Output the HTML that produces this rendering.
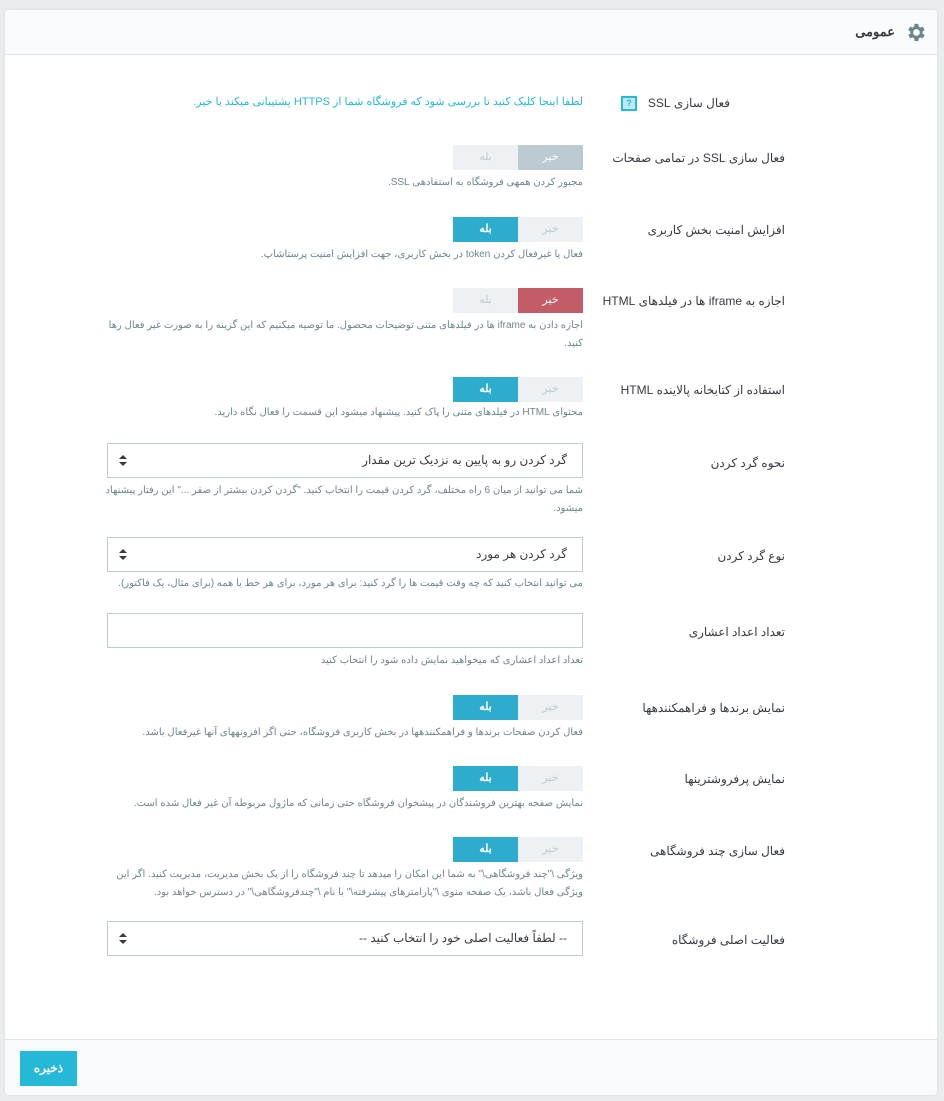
<!DOCTYPE html>
<html lang="fa" dir="rtl"><head><meta charset="utf-8">
<style>
*{box-sizing:border-box;margin:0;padding:0}
body{width:944px;height:1101px;background:#eaedee;font-family:"Liberation Sans","Noto Sans CJK SC",sans-serif;position:relative;overflow:hidden;color:#363a41}
.card{position:absolute;left:5px;top:10px;width:932px;height:1085px;background:#fff;border-radius:4px;box-shadow:0 0 3px rgba(0,0,0,.08)}
.hdr{position:absolute;left:0;top:0;width:932px;height:45px;background:#fafbfc;border-bottom:1px solid #dde3e6;border-radius:4px 4px 0 0}
.hdr span{position:absolute;right:42px;top:14px;font-size:13px;font-weight:bold;color:#363a41}
.hdr svg{position:absolute;right:10px;top:11px}
.ftr{position:absolute;left:0;top:1029px;width:932px;height:56px;background:#f8fafb;border-top:1px solid #dde3e6;border-radius:0 0 4px 4px}
.btn{position:absolute;left:15px;top:11px;width:57px;height:35px;background:#25b9d7;color:#fff;font-size:12px;text-align:center;line-height:35px;font-weight:bold}
.lbl{position:absolute;right:152px;font-size:12px;color:#363a41;white-space:nowrap}
.help{position:absolute;right:354px;width:480px;font-size:10px;color:#6c868e;line-height:18px;text-align:right}
.sw{position:absolute;left:448px;width:130px;height:25px;display:flex;flex-direction:row}
.sw div{width:65px;height:25px;font-size:11px;text-align:center;line-height:25px;background:#eef1f3;color:#bbcdd2}
.sel{position:absolute;left:102px;width:476px;height:35px;border:1px solid #bbcdd2;font-size:12px;line-height:33px;padding-right:15px;color:#363a41}
.sel i{position:absolute;left:11px;top:11px;width:8px;height:12px}
.sel i:before{content:"";position:absolute;left:0;top:0;border:4px solid transparent;border-bottom:4px solid #363a41;border-top:0}
.sel i:after{content:"";position:absolute;left:0;top:7px;border:4px solid transparent;border-top:4px solid #363a41;border-bottom:0}
</style></head><body>
<div class="card">
<div class="hdr"><svg width="23" height="23" viewBox="0 0 24 24"><path fill="#6c868e" d="M19.4 13a7.5 7.5 0 0 0 0-2l2.1-1.6-2-3.5-2.5 1a7 7 0 0 0-1.7-1L15 3h-4l-.4 2.9a7 7 0 0 0-1.7 1l-2.5-1-2 3.5L6.6 11a7.5 7.5 0 0 0 0 2l-2.1 1.6 2 3.5 2.5-1a7 7 0 0 0 1.7 1L11 21h4l.4-2.9a7 7 0 0 0 1.7-1l2.5 1 2-3.5zM13 15.5a3.5 3.5 0 1 1 0-7 3.5 3.5 0 0 1 0 7z"/></svg><span>عمومی</span></div>

<div class="lbl" style="top:86px;right:207px">فعال سازی SSL</div>
<div style="position:absolute;right:300px;top:86px;width:16px;height:15px;border:2px solid #25b9d7;background:#bde9f2;font-size:9px;line-height:11px;text-align:center;color:#25b9d7;font-weight:bold">?</div>
<div style="position:absolute;right:354px;top:85px;font-size:11px;color:#25b9d7;white-space:nowrap">لطفا اینجا کلیک کنید تا بررسی شود که فروشگاه شما از HTTPS پشتیبانی میکند یا خیر.</div>

<div class="lbl" style="top:141px">فعال سازی SSL در تمامی صفحات</div>
<div class="sw" style="top:135px"><div style="background:#bbcbd1;color:#fff">خیر</div><div>بله</div></div>
<div class="help" style="top:164px">مجبور کردن همهی فروشگاه به استفادهی SSL.</div>

<div class="lbl" style="top:213px">افزایش امنیت بخش کاربری</div>
<div class="sw" style="top:207px"><div>خیر</div><div style="background:#2eacce;color:#fff;font-weight:bold">بله</div></div>
<div class="help" style="top:236px">فعال یا غیرفعال کردن token در بخش کاربری، جهت افزایش امنیت پرستاشاپ.</div>

<div class="lbl" style="top:284px">اجازه به iframe ها در فیلدهای HTML</div>
<div class="sw" style="top:278px"><div style="background:#c45c67;color:#fff">خیر</div><div>بله</div></div>
<div class="help" style="top:307px">اجازه دادن به iframe ها در فیلدهای متنی توضیحات محصول. ما توصیه میکنیم که این گزینه را به صورت غیر فعال رها کنید.</div>

<div class="lbl" style="top:373px">استفاده از کتابخانه پالاینده HTML</div>
<div class="sw" style="top:367px"><div>خیر</div><div style="background:#2eacce;color:#fff;font-weight:bold">بله</div></div>
<div class="help" style="top:394px">محتوای HTML در فیلدهای متنی را پاک کنید. پیشنهاد میشود این قسمت را فعال نگاه دارید.</div>

<div class="lbl" style="top:446px">نحوه گرد کردن</div>
<div class="sel" style="top:433px">گرد کردن رو به پایین به نزدیک ترین مقدار<i></i></div>
<div class="help" style="top:472px">شما می توانید از میان 6 راه مختلف، گرد کردن قیمت را انتخاب کنید. "گردن کردن بیشتر از صفر ..." این رفتار پیشنهاد میشود.</div>

<div class="lbl" style="top:539px">نوع گرد کردن</div>
<div class="sel" style="top:527px">گرد کردن هر مورد<i></i></div>
<div class="help" style="top:565px">می توانید انتخاب کنید که چه وقت قیمت ها را گرد کنید: برای هر مورد، برای هر خط یا همه (برای مثال، یک فاکتور).</div>

<div class="lbl" style="top:615px">تعداد اعداد اعشاری</div>
<div class="sel" style="top:603px"></div>
<div class="help" style="top:642px">تعداد اعداد اعشاری که میخواهید نمایش داده شود را انتخاب کنید</div>

<div class="lbl" style="top:691px">نمایش برندها و فراهمکنندهها</div>
<div class="sw" style="top:685px"><div>خیر</div><div style="background:#2eacce;color:#fff;font-weight:bold">بله</div></div>
<div class="help" style="top:714px">فعال کردن صفحات برندها و فراهمکنندهها در بخش کاربری فروشگاه، حتی اگر افزونههای آنها غیرفعال باشد.</div>

<div class="lbl" style="top:762px">نمایش پرفروشترینها</div>
<div class="sw" style="top:756px"><div>خیر</div><div style="background:#2eacce;color:#fff;font-weight:bold">بله</div></div>
<div class="help" style="top:785px">نمایش صفحه بهترین فروشندگان در پیشخوان فروشگاه حتی زمانی که ماژول مربوطه آن غیر فعال شده است.</div>

<div class="lbl" style="top:834px">فعال سازی چند فروشگاهی</div>
<div class="sw" style="top:827px"><div>خیر</div><div style="background:#2eacce;color:#fff;font-weight:bold">بله</div></div>
<div class="help" style="top:856px">ویژگی \"چند فروشگاهی\" به شما این امکان را میدهد تا چند فروشگاه را از یک بخش مدیریت، مدیریت کنید. اگر این ویژگی فعال باشد، یک صفحه منوی \"پارامترهای پیشرفته\" با نام \"چندفروشگاهی\" در دسترس خواهد بود.</div>

<div class="lbl" style="top:923px">فعالیت اصلی فروشگاه</div>
<div class="sel" style="top:911px">-- لطفاً فعالیت اصلی خود را انتخاب کنید --<i></i></div>

<div class="ftr"><div class="btn">ذخیره</div></div>
</div>
</body></html>
